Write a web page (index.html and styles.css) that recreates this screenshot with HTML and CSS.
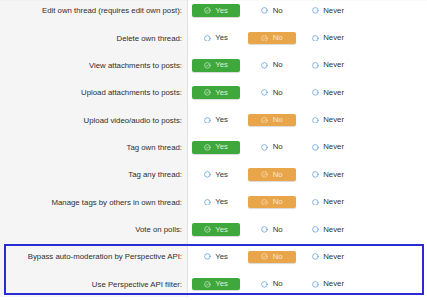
FILE: index.html
```html
<!DOCTYPE html>
<html>
<head>
<meta charset="utf-8">
<link rel="stylesheet" href="styles.css">
</head>
<body>
<div class="page">
  <div class="perm-list">
    <div class="row"><div class="label">Edit own thread (requires edit own post):</div><div class="options"><span class="opt sel-yes"><svg class="ico" viewBox="0 0 14 14"><circle cx="7" cy="7" r="5.8"/><path d="M4.4 7.2l1.8 1.8 3.5-3.7"/></svg>Yes</span><span class="opt"><svg class="ico radio" viewBox="0 0 14 14"><circle cx="7" cy="7" r="5.8"/></svg>No</span><span class="opt"><svg class="ico radio" viewBox="0 0 14 14"><circle cx="7" cy="7" r="5.8"/></svg>Never</span></div></div>
    <div class="row"><div class="label">Delete own thread:</div><div class="options"><span class="opt"><svg class="ico radio" viewBox="0 0 14 14"><circle cx="7" cy="7" r="5.8"/></svg>Yes</span><span class="opt sel-no"><svg class="ico" viewBox="0 0 14 14"><circle cx="7" cy="7" r="5.8"/><path d="M4.4 7.2l1.8 1.8 3.5-3.7"/></svg>No</span><span class="opt"><svg class="ico radio" viewBox="0 0 14 14"><circle cx="7" cy="7" r="5.8"/></svg>Never</span></div></div>
    <div class="row"><div class="label">View attachments to posts:</div><div class="options"><span class="opt sel-yes"><svg class="ico" viewBox="0 0 14 14"><circle cx="7" cy="7" r="5.8"/><path d="M4.4 7.2l1.8 1.8 3.5-3.7"/></svg>Yes</span><span class="opt"><svg class="ico radio" viewBox="0 0 14 14"><circle cx="7" cy="7" r="5.8"/></svg>No</span><span class="opt"><svg class="ico radio" viewBox="0 0 14 14"><circle cx="7" cy="7" r="5.8"/></svg>Never</span></div></div>
    <div class="row"><div class="label">Upload attachments to posts:</div><div class="options"><span class="opt sel-yes"><svg class="ico" viewBox="0 0 14 14"><circle cx="7" cy="7" r="5.8"/><path d="M4.4 7.2l1.8 1.8 3.5-3.7"/></svg>Yes</span><span class="opt"><svg class="ico radio" viewBox="0 0 14 14"><circle cx="7" cy="7" r="5.8"/></svg>No</span><span class="opt"><svg class="ico radio" viewBox="0 0 14 14"><circle cx="7" cy="7" r="5.8"/></svg>Never</span></div></div>
    <div class="row"><div class="label">Upload video/audio to posts:</div><div class="options"><span class="opt"><svg class="ico radio" viewBox="0 0 14 14"><circle cx="7" cy="7" r="5.8"/></svg>Yes</span><span class="opt sel-no"><svg class="ico" viewBox="0 0 14 14"><circle cx="7" cy="7" r="5.8"/><path d="M4.4 7.2l1.8 1.8 3.5-3.7"/></svg>No</span><span class="opt"><svg class="ico radio" viewBox="0 0 14 14"><circle cx="7" cy="7" r="5.8"/></svg>Never</span></div></div>
    <div class="row"><div class="label">Tag own thread:</div><div class="options"><span class="opt sel-yes"><svg class="ico" viewBox="0 0 14 14"><circle cx="7" cy="7" r="5.8"/><path d="M4.4 7.2l1.8 1.8 3.5-3.7"/></svg>Yes</span><span class="opt"><svg class="ico radio" viewBox="0 0 14 14"><circle cx="7" cy="7" r="5.8"/></svg>No</span><span class="opt"><svg class="ico radio" viewBox="0 0 14 14"><circle cx="7" cy="7" r="5.8"/></svg>Never</span></div></div>
    <div class="row"><div class="label">Tag any thread:</div><div class="options"><span class="opt"><svg class="ico radio" viewBox="0 0 14 14"><circle cx="7" cy="7" r="5.8"/></svg>Yes</span><span class="opt sel-no"><svg class="ico" viewBox="0 0 14 14"><circle cx="7" cy="7" r="5.8"/><path d="M4.4 7.2l1.8 1.8 3.5-3.7"/></svg>No</span><span class="opt"><svg class="ico radio" viewBox="0 0 14 14"><circle cx="7" cy="7" r="5.8"/></svg>Never</span></div></div>
    <div class="row"><div class="label">Manage tags by others in own thread:</div><div class="options"><span class="opt"><svg class="ico radio" viewBox="0 0 14 14"><circle cx="7" cy="7" r="5.8"/></svg>Yes</span><span class="opt sel-no"><svg class="ico" viewBox="0 0 14 14"><circle cx="7" cy="7" r="5.8"/><path d="M4.4 7.2l1.8 1.8 3.5-3.7"/></svg>No</span><span class="opt"><svg class="ico radio" viewBox="0 0 14 14"><circle cx="7" cy="7" r="5.8"/></svg>Never</span></div></div>
    <div class="row"><div class="label">Vote on polls:</div><div class="options"><span class="opt sel-yes"><svg class="ico" viewBox="0 0 14 14"><circle cx="7" cy="7" r="5.8"/><path d="M4.4 7.2l1.8 1.8 3.5-3.7"/></svg>Yes</span><span class="opt"><svg class="ico radio" viewBox="0 0 14 14"><circle cx="7" cy="7" r="5.8"/></svg>No</span><span class="opt"><svg class="ico radio" viewBox="0 0 14 14"><circle cx="7" cy="7" r="5.8"/></svg>Never</span></div></div>
    <div class="row"><div class="label">Bypass auto-moderation by Perspective API:</div><div class="options"><span class="opt"><svg class="ico radio" viewBox="0 0 14 14"><circle cx="7" cy="7" r="5.8"/></svg>Yes</span><span class="opt sel-no"><svg class="ico" viewBox="0 0 14 14"><circle cx="7" cy="7" r="5.8"/><path d="M4.4 7.2l1.8 1.8 3.5-3.7"/></svg>No</span><span class="opt"><svg class="ico radio" viewBox="0 0 14 14"><circle cx="7" cy="7" r="5.8"/></svg>Never</span></div></div>
    <div class="row"><div class="label">Use Perspective API filter:</div><div class="options"><span class="opt sel-yes"><svg class="ico" viewBox="0 0 14 14"><circle cx="7" cy="7" r="5.8"/><path d="M4.4 7.2l1.8 1.8 3.5-3.7"/></svg>Yes</span><span class="opt"><svg class="ico radio" viewBox="0 0 14 14"><circle cx="7" cy="7" r="5.8"/></svg>No</span><span class="opt"><svg class="ico radio" viewBox="0 0 14 14"><circle cx="7" cy="7" r="5.8"/></svg>Never</span></div></div>
  </div>
  <div class="highlight"></div>
</div>
</body>
</html>
```

FILE: styles.css
```css
html, body {
  margin: 0;
  padding: 0;
  height: 100%;
  overflow: hidden;
  background: #fff;
}

body {
  font-family: "Liberation Sans", Arial, Helvetica, sans-serif;
  font-size: 7.8px;
  color: #333;
}

.page {
  position: relative;
  height: 100%;
  background: linear-gradient(to right, #f5f5f5 0, #f5f5f5 187px, #e2e2e2 187px, #e2e2e2 188px, #fff 188px);
}

.page::before {
  content: "";
  position: absolute;
  left: 0;
  right: 0;
  top: 0;
  height: 4px;
  background: linear-gradient(to bottom, rgba(0,0,0,0.16), rgba(0,0,0,0));
  z-index: 2;
}

.perm-list {
  display: flex;
  flex-direction: column;
  margin-top: -3px;
}

.row {
  display: grid;
  grid-template-columns: 188px 1fr;
  height: 27.35px;
  align-items: center;
}

.label {
  text-align: right;
  padding-right: 6px;
  white-space: nowrap;
  color: #2f2f2f;
}

.options {
  display: flex;
  gap: 8px;
  padding-left: 4px;
}

.opt {
  width: 48px;
  height: 12.5px;
  box-sizing: border-box;
  display: flex;
  align-items: center;
  justify-content: center;
  gap: 4.5px;
  border-radius: 2px;
  color: #333;
  line-height: 1;
}

.ico {
  width: 6.8px;
  height: 6.8px;
  flex: none;
  fill: none;
  stroke: currentColor;
  stroke-width: 1.3;
  stroke-linecap: round;
  stroke-linejoin: round;
}

.ico.radio {
  stroke: #5b9bd5;
  fill: #fff;
  stroke-width: 1.5;
}

.sel-yes {
  background: #3ea83c;
  color: #d9f1d6;
  box-shadow: 0 1px 1px rgba(0,0,0,0.15);
}

.sel-no {
  background: #e9a54a;
  color: #fbe6c8;
  box-shadow: 0 1px 1px rgba(0,0,0,0.15);
}

.highlight {
  position: absolute;
  left: 4px;
  top: 247px;
  width: 420px;
  height: 51px;
  box-sizing: border-box;
  border: 2px solid #2b2bd6;
  pointer-events: none;
}
```
